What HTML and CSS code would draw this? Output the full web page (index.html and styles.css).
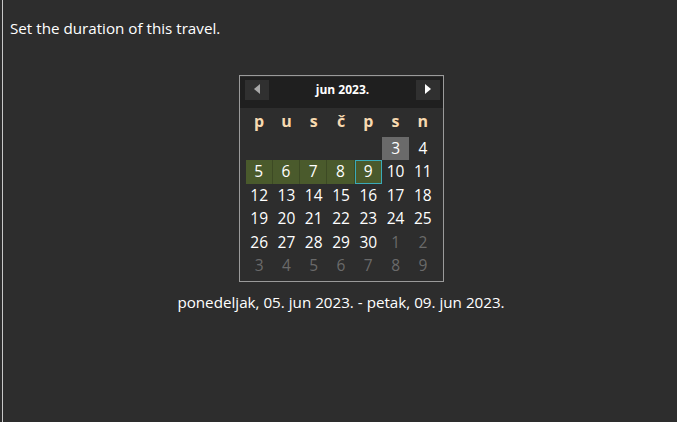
FILE: index.html
```html
<!DOCTYPE html>
<html>
<head>
<meta charset="utf-8">
<link rel="stylesheet" href="styles.css">
</head>
<body>
<div class="frame">
  <p class="title">Set the duration of this travel.</p>
  <div class="cal-wrap">
    <div class="cal">
      <div class="cal-head">
        <button class="nav prev"><svg width="8" height="10" viewBox="0 0 8 10"><path d="M7 0 L1 5 L7 10 Z" fill="#a8a8a8"/></svg></button>
        <span class="month">jun 2023.</span>
        <button class="nav next"><svg width="8" height="10" viewBox="0 0 8 10"><path d="M1 0 L7 5 L1 10 Z" fill="#ffffff"/></svg></button>
      </div>
      <div class="grid names">
        <span>p</span><span>u</span><span>s</span><span>č</span><span>p</span><span>s</span><span>n</span>
      </div>
      <div class="grid days">
        <span class="d empty"></span><span class="d empty"></span><span class="d empty"></span><span class="d empty"></span><span class="d empty"></span>
        <span class="d today">3</span><span class="d">4</span>
        <span class="d sel">5</span><span class="d sel">6</span><span class="d sel">7</span><span class="d sel">8</span><span class="d sel last">9</span><span class="d">10</span><span class="d">11</span>
        <span class="d">12</span><span class="d">13</span><span class="d">14</span><span class="d">15</span><span class="d">16</span><span class="d">17</span><span class="d">18</span>
        <span class="d">19</span><span class="d">20</span><span class="d">21</span><span class="d">22</span><span class="d">23</span><span class="d">24</span><span class="d">25</span>
        <span class="d">26</span><span class="d">27</span><span class="d">28</span><span class="d">29</span><span class="d">30</span><span class="d other">1</span><span class="d other">2</span>
        <span class="d other">3</span><span class="d other">4</span><span class="d other">5</span><span class="d other">6</span><span class="d other">7</span><span class="d other">8</span><span class="d other">9</span>
      </div>
    </div>
  </div>
  <p class="range">ponedeljak, 05. jun 2023. - petak, 09. jun 2023.</p>
</div>
</body>
</html>
```
FILE: styles.css
```css
html, body {
  margin: 0;
  padding: 0;
  height: 100%;
  background: #2d2d2d;
}
body {
  padding-left: 2px;
  box-sizing: border-box;
  font-family: "Open Sans", "Noto Sans", sans-serif;
  color: #ffffff;
}
.frame {
  border-left: 1px solid #c8c8c8;
  height: 100%;
  box-sizing: border-box;
  padding-left: 7px;
  padding-top: 18px;
}
.title {
  margin: 0;
  font-size: 15.2px;
  line-height: 20px;
}
.cal-wrap {
  display: flex;
  justify-content: center;
  margin-top: 37px;
  padding-right: 5px;
}
.cal {
  width: 205px;
  box-sizing: border-box;
  border: 1px solid #9a9a9a;
  padding: 1px 0 4px;
}
.cal-head {
  display: flex;
  align-items: center;
  justify-content: space-between;
  height: 31px;
  background: #1f1f1f;
  padding: 0 2px 0 5px;
}
.nav {
  width: 24px;
  height: 20px;
  border: none;
  background: #303030;
  padding: 0;
  display: flex;
  align-items: flex-start;
  justify-content: center;
  padding-top: 4px;
  box-sizing: border-box;
  margin-top: -6px;
}
.month {
  font-weight: bold;
  font-size: 12px;
  color: #ffffff;
  margin-top: -6px;
}
.grid {
  display: grid;
  grid-template-columns: repeat(7, 1fr);
  padding: 0 6px;
}
.names {
  height: 29px;
  align-items: center;
}
.names span {
  text-align: center;
  font-weight: bold;
  font-size: 16px;
  color: #f7d9b0;
  margin-top: -3px;
}
.d {
  height: 23.4px;
  line-height: 23px;
  text-align: center;
  font-size: 15.5px;
  color: #ffffff;
  box-sizing: border-box;
}
.today {
  background: #6a6a6a;
}
.sel {
  background: #4a5a2c;
  border-right: 1px solid #3d4a24;
}
.sel.last {
  border: 1px solid #3aabb8;
  line-height: 21px;
}
.other {
  color: #6a6a6a;
}
.range {
  margin: 10px 0 0;
  padding-right: 5px;
  text-align: center;
  font-size: 15.2px;
  line-height: 20px;
}
```
